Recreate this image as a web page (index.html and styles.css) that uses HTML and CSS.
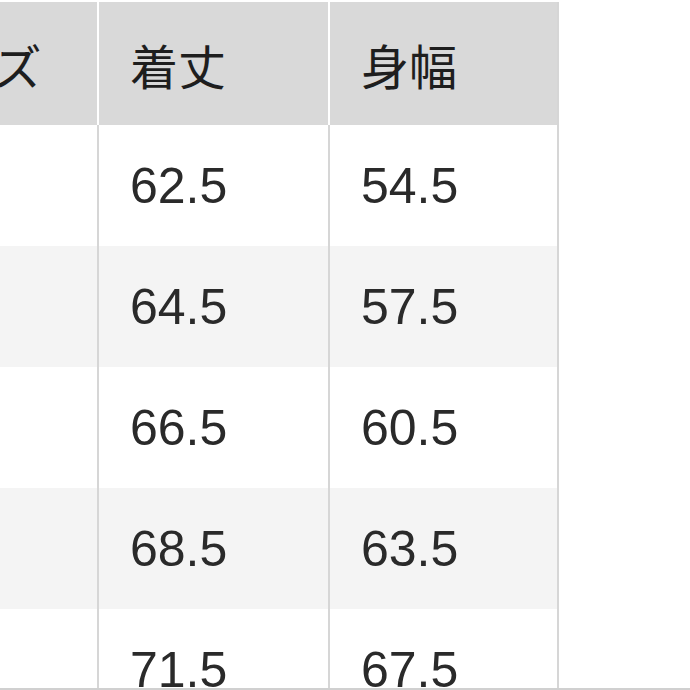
FILE: index.html
```html
<!DOCTYPE html>
<html lang="ja">
<head>
<meta charset="utf-8">
<title>サイズ表</title>
<link rel="stylesheet" href="styles.css">
</head>
<body>
<div class="frame">
  <table class="size-table">
    <thead>
      <tr>
        <th class="col-size">サイズ</th>
        <th class="col-a">着丈</th>
        <th class="col-b">身幅</th>
      </tr>
    </thead>
    <tbody>
      <tr><td></td><td>62.5</td><td>54.5</td></tr>
      <tr class="alt"><td></td><td>64.5</td><td>57.5</td></tr>
      <tr><td></td><td>66.5</td><td>60.5</td></tr>
      <tr class="alt"><td></td><td>68.5</td><td>63.5</td></tr>
      <tr><td></td><td>71.5</td><td>67.5</td></tr>
    </tbody>
  </table>
</div>
</body>
</html>
```
FILE: styles.css
```css
html, body {
  margin: 0;
  padding: 0;
  background: #ffffff;
}
.frame {
  width: 690px;
  height: 688px;
  overflow: hidden;
  border-bottom: 2px solid #d0d0d0;
}
.size-table {
  margin-top: 2px;
  margin-left: -132px;
  border-collapse: separate;
  border-spacing: 0;
  table-layout: fixed;
  font-family: "Liberation Sans", "Noto Sans CJK JP", sans-serif;
  font-size: 50px;
  color: #2a2a2a;
}
.size-table th,
.size-table td {
  box-sizing: content-box;
  padding: 0 0 0 31px;
  text-align: left;
  vertical-align: middle;
  font-weight: 400;
  line-height: 1;
}
.size-table th {
  height: 123px;
  background: #d9d9d9;
  border-right: 2px solid #ffffff;
  font-family: "Noto Sans CJK JP", sans-serif;
  font-size: 48px;
  color: #1e1e1e;
}
.size-table td {
  height: 121px;
  background: #ffffff;
  border-right: 2px solid #d6d6d6;
}
.size-table tr.alt td {
  background: #f4f4f4;
}
.col-size { width: 198px; }
.col-a { width: 198px; }
.col-b { width: 196px; }
.size-table th.col-b {
  border-right-color: #d6d6d6;
}
```
